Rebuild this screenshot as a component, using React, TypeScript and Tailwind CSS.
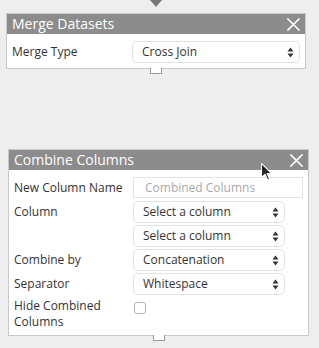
import React from 'react';

const font = { fontFamily: '"Open Sans", "Noto Sans", sans-serif' };

const CloseIcon: React.FC = () => (
  <svg width="13" height="13" viewBox="0 0 13 13" className="shrink-0">
    <path d="M1 1L12 12M12 1L1 12" stroke="#fff" strokeWidth={1.6} strokeLinecap="square" />
  </svg>
);

const UpDown: React.FC = () => (
  <svg width="7" height="11" viewBox="0 0 7 11" className="shrink-0">
    <path d="M3.5 0.5L6.5 4.5H0.5Z" fill="#333" />
    <path d="M3.5 10.5L6.5 6.5H0.5Z" fill="#333" />
  </svg>
);

const Select: React.FC<{ value: string; className?: string }> = ({ value, className = '' }) => (
  <div className={`h-[22px] flex items-center justify-between rounded-[5px] border border-[#e2e2e2] bg-white pl-[9px] pr-[5px] text-[12px] text-[#333] ${className}`}>
    <span>{value}</span>
    <UpDown />
  </div>
);

const Header: React.FC<{ title: string }> = ({ title }) => (
  <div className="h-[20px] bg-[#8c8c8c] flex items-center justify-between pl-[5px] pr-[5px]">
    <span className="text-white text-[14px] leading-[20px]">{title}</span>
    <CloseIcon />
  </div>
);

const Connector: React.FC = () => (
  <div className="mx-auto w-[12px] h-[6px] border-x border-b border-[#9a9a9a] bg-white -mt-px" />
);

const Label: React.FC<{ children: React.ReactNode }> = ({ children }) => (
  <div className="text-[12px] leading-[22px] text-[#333]">{children}</div>
);

export default function App() {
  return (
    <div className="relative w-[319px] h-[348px] bg-[#eeeeee] overflow-hidden" style={font}>
      <div className="flex justify-center w-[312px] h-[13px]">
        <svg width="12" height="8" viewBox="0 0 12 8">
          <path d="M0 0H12L6 7Z" fill="#777" />
        </svg>
      </div>

      <div className="ml-[6px] w-[300px]">
        <div className="border border-[#c9c9c9] bg-white">
          <Header title="Merge Datasets" />
          <div className="grid grid-cols-[120px_1fr] items-center pt-[7px] pb-[5px] pl-[5px] pr-[5px]">
            <Label>Merge Type</Label>
            <Select value="Cross Join" className="h-[21px]" />
          </div>
        </div>
        <Connector />
      </div>

      <div className="ml-[8px] mt-[75px] w-[301px]">
        <div className="border border-[#c9c9c9] bg-white">
          <Header title="Combine Columns" />
          <div className="grid grid-cols-[119px_1fr] gap-y-[2px] pt-[7px] pb-[5px] pl-[5px] pr-[5px]">
            <Label>New Column Name</Label>
            <div className="h-[21px] mb-[1px] flex items-center border border-[#e2e2e2] pl-[11px] text-[12px] text-[#aaa]">
              Combined Columns
            </div>
            <Label>Column</Label>
            <Select value="Select a column" className="w-[152px]" />
            <div />
            <Select value="Select a column" className="w-[152px]" />
            <Label>Combine by</Label>
            <Select value="Concatenation" className="w-[152px]" />
            <Label>Separator</Label>
            <Select value="Whitespace" className="w-[152px]" />
            <div className="text-[12px] text-[#333] pt-[1px]">
              <div className="leading-[16px]">Hide Combined</div>
              <div className="leading-[16px]">Columns</div>
            </div>
            <div className="pt-[5px] pl-[1px]">
              <div className="w-[12px] h-[12px] rounded-[3px] border border-[#b5b5b5] bg-white" />
            </div>
          </div>
        </div>
        <Connector />
      </div>

      <svg className="absolute left-[260px] top-[162px]" width="14" height="20" viewBox="0 0 14 20">
        <path d="M1.5 1.5V15.5L5 12.3L7.6 18L9.6 17.1L7.1 11.6H11.8Z" fill="#111" stroke="#fff" strokeWidth={1.1} strokeLinejoin="round" opacity={0.9} />
      </svg>
    </div>
  );
}
